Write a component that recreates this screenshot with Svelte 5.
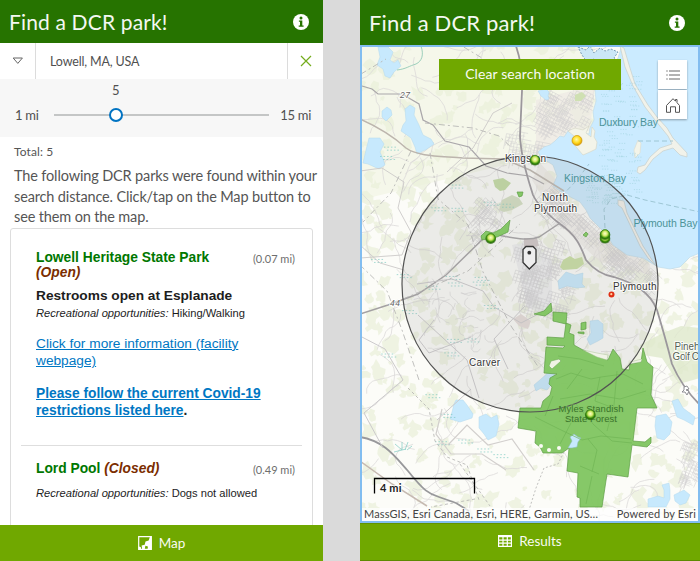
<script>
  // Small deterministic generator for the local street and woodland texture.
  function makeRandom(seed) {
    let s = seed;
    return () => {
      s = (s * 16807) % 2147483647;
      return s / 2147483647;
    };
  }

  const rand = makeRandom(4271);

  function walk(x, y, steps, len, turn) {
    let a = rand() * Math.PI * 2;
    let d = `M${x.toFixed(1)} ${y.toFixed(1)}`;
    for (let i = 0; i < steps; i++) {
      a += (rand() - 0.5) * turn;
      x += Math.cos(a) * len;
      y += Math.sin(a) * len;
      d += `L${x.toFixed(1)} ${y.toFixed(1)}`;
    }
    return d;
  }

  function blob(x, y, r) {
    let pts = [];
    for (let i = 0; i < 11; i++) {
      const a = (i / 11) * Math.PI * 2;
      const q = r * (0.4 + rand() * 0.9);
      pts.push(`${(x + Math.cos(a) * q).toFixed(1)},${(y + Math.sin(a) * q).toFixed(1)}`);
    }
    return pts.join(' ');
  }

  // A cluster of short parallel blocks, rotated to sit beside the shore.
  function grid(x, y, angle, n) {
    let d = '';
    const c = Math.cos(angle), s = Math.sin(angle);
    for (let i = 0; i < n; i++) {
      const o = i * 3.4;
      const l = 8 + rand() * 8;
      d += `M${x - s * o} ${y + c * o}l${c * l} ${s * l}`;
      d += `M${x + c * o} ${y + s * o}l${-s * l} ${c * l}`;
    }
    return d;
  }

  const woods = Array.from({ length: 620 }, () => blob(360 + rand() * 340, 45 + rand() * 477, 2 + rand() * 7));
  const streets = Array.from({ length: 210 }, () => walk(360 + rand() * 340, 45 + rand() * 477, 9, 5, 1.1));
  const lanes = [
    ...Array.from({ length: 22 }, () => grid(535 + rand() * 50, 90 + rand() * 40, 0.5, 4)),
    ...Array.from({ length: 42 }, () => {
      const t = rand();
      return grid(533 + t * 110 + rand() * 16, 176 + t * 85 + rand() * 26, 0.75, 4);
    }),
    ...Array.from({ length: 34 }, () => grid(515 + rand() * 50, 238 + rand() * 70, 0.3, 4)),
    ...Array.from({ length: 26 }, () => walk(425 + rand() * 60, 290 + rand() * 60, 4, 4, 1.8)),
    ...Array.from({ length: 14 }, () => grid(474 + rand() * 30, 192 + rand() * 40, 0.7, 3)),
    ...Array.from({ length: 12 }, () => grid(680 + rand() * 18, 440 + rand() * 40, 0.4, 3)),
    ...Array.from({ length: 12 }, () => grid(505 + rand() * 35, 125 + rand() * 36, 0.2, 3))
  ];
  const marsh = Array.from({ length: 26 }, () => [365 + rand() * 140, 140 + rand() * 330]);
  const shoals = Array.from({ length: 95 }, () => [598 + rand() * 40, 75 + rand() * 120]);
  const flats = Array.from({ length: 45 }, () => [585 + rand() * 32, 178 + rand() * 26]);

  const labels = [
    { t: 'Duxbury Bay', x: 599, y: 126, w: 59, c: 'sea' },
    { t: 'Kingston Bay', x: 564, y: 181.5, w: 62, c: 'sea' },
    { t: 'Plymouth Bay', x: 633.5, y: 226.5, w: 64, c: 'sea' },
    { t: 'Kingston', x: 505, y: 162, w: 41, c: 'town' },
    { t: 'North', x: 542, y: 201, w: 26, c: 'town' },
    { t: 'Plymouth', x: 534, y: 212, w: 43, c: 'town' },
    { t: 'Plymouth', x: 613, y: 290, w: 43.5, c: 'town' },
    { t: 'Carver', x: 469, y: 366, w: 31, c: 'town' },
    { t: 'Pineh', x: 674.5, y: 349.5, w: 25, c: 'place' },
    { t: 'Golf C', x: 672.5, y: 360, w: 26.5, c: 'place' },
    { t: 'Myles Standish', x: 558.5, y: 412, w: 65, c: 'forest' },
    { t: 'State Forest', x: 565, y: 422, w: 52, c: 'forest' },
    { t: '27', x: 400, y: 98, w: 10, c: 'route' },
    { t: '44', x: 390, y: 305.5, w: 10, c: 'route' }
  ];

  const pins = [
    [535, 160], [490.7, 238.3], [605, 238], [605, 234.3], [590.3, 414.5]
  ];
</script>

{#snippet info()}
  <svg class="info" viewBox="0 0 16 16" width="16" height="16">
    <circle cx="8" cy="8" r="8" fill="#fff" />
    <circle cx="8" cy="4" r="1.5" fill="#267300" />
    <path d="M5.9 6.5h3.4v5h1.3v1.2H5.7v-1.2H7V7.7H5.9z" fill="#267300" />
  </svg>
{/snippet}

<div class="board">
  <section class="phone left">
    <header><h1>Find a DCR park!</h1>{@render info()}</header>
    <div class="search">
      <div class="drop">
        <svg width="12" height="8" viewBox="0 0 12 8"><path d="M1.2 1h9.2L5.8 6.4z" fill="none" stroke="#666" /></svg>
      </div>
      <div class="query">Lowell, MA, USA</div>
      <div class="clear">
        <svg width="12" height="12" viewBox="0 0 12 12"><path d="M1 1l10 10M11 1L1 11" stroke="#74ac1c" stroke-width="1.2" /></svg>
      </div>
    </div>
    <div class="range">
      <span class="min">1 mi</span>
      <div class="track"><span class="value">5</span><i class="thumb"></i></div>
      <span class="max">15 mi</span>
    </div>
    <div class="results">
      <p class="total">Total: 5</p>
      <p class="intro">
        The following DCR parks were found within your<br />
        search distance. Click/tap on the Map button to<br />
        see them on the map.
      </p>
      <div class="card">
        <article class="first">
          <div class="title">
            <h2>Lowell Heritage State Park <em>(Open)</em></h2>
            <small>(0.07 mi)</small>
          </div>
          <h3>Restrooms open at Esplanade</h3>
          <p class="rec"><i>Recreational opportunities:</i> Hiking/Walking</p>
          <p class="link"><u>Click for more information (facility<br />webpage)</u></p>
          <p class="link strong"><u>Please follow the current Covid-19<br />restrictions listed here</u><b>.</b></p>
        </article>
        <article class="second">
          <div class="title">
            <h2>Lord Pool <em>(Closed)</em></h2>
            <small>(0.49 mi)</small>
          </div>
          <p class="rec"><i>Recreational opportunities:</i> Dogs not allowed</p>
        </article>
      </div>
    </div>
    <footer>
      <svg width="14" height="14" viewBox="0 0 14 14">
        <path d="M.7.7h12.6v12.6H.7z" fill="none" stroke="#fff" stroke-width="1.2" />
        <path d="M13.5.5v13H9.6l.3-3-2.5-.8-.7 3.8H4.2L3.6 9.6l3.1-.8.8-3.2 3.2-1L12 .5zM.5 10.5l2.3.4.4 2.6H.5z" fill="#fff" />
      </svg>
      <span>Map</span>
    </footer>
  </section>

  <section class="phone right">
    <header><h1>Find a DCR park!</h1>{@render info()}</header>
    <div class="map">
      <svg class="canvas" viewBox="360 45 340 478" width="340" height="478">
        <defs>
          <radialGradient id="green" cx=".5" cy=".42" r=".55">
            <stop offset="0" stop-color="#fbffd0" /><stop offset=".45" stop-color="#d3ea6c" />
            <stop offset=".8" stop-color="#4a9d12" /><stop offset="1" stop-color="#1d6500" />
          </radialGradient>
          <radialGradient id="gold" cx=".45" cy=".4" r=".6">
            <stop offset="0" stop-color="#fff9a8" /><stop offset=".6" stop-color="#ffd91c" /><stop offset="1" stop-color="#d99400" />
          </radialGradient>
        </defs>
        <rect x="360" y="45" width="340" height="478" fill="#fcfcf8" />
        <path d="M360 45h235v110l-70 5-165 40z" fill="#f5f7ea" />
        <g fill="#eaf0da" opacity=".7">
          {#each woods as w}<polygon points={w} />{/each}
        </g>
        <g fill="none" stroke="#dad8d8" stroke-width=".8" opacity=".9">
          {#each streets as d}<path {d} />{/each}
        </g>
        <path d="M536 100L595 85 590 130 560 140 536 155zM540 163L558 182 575 212 612 244 650 264 650 275 600 262 560 225 532 180z" fill="#ece8e3" opacity=".65" />
        <path d="M512 245l20-4 20 20v55l-24-8z" fill="#eaeaec" opacity=".7" />
        <g fill="none" stroke="#cfcdcf" stroke-width=".6" opacity=".8">
          {#each lanes as d}<path {d} />{/each}
        </g>
        <path d="M524 238l13 0 2 8-15 3z" fill="#d0c6c6" />
        <path d="M513 319l8-5 10 7-3 8-9-3z" fill="#e6dcd8" />
        <path d="M493 180l10-2 8 5-6 7-5 1-5-4z" fill="#c2dba2" />
        <path d="M502 200l10-5 7 3 4 6-11 6-8 2-5-2z" fill="#d4dfc1" />
        <path d="M575 95l7-3 4 4-5 5-6 0z" fill="#cfe0b2" />
        <path d="M640 345l23-12 18-7 19 2v50l-21 6-17-26-19-3z" fill="#dfe9cc" opacity=".8" />
        <path d="M560 267l3-7 7-4 5 3 7-2 2 7-7 5-14 1z" fill="#c9dfa2" />

        <!-- sea and shoreline -->
        <path d="M622 45L618 58 607 72 598 82 595 90 596 101 593 112 594 120 590 128 589 134 578 132 568 131 564 137 560 136 555 141 550 145 544 147 538 152 542 158 553 165 557 176 553 186 563 193 580 202 586 210 590 218 599 227 607 235 613 245 627 255 643 258 658 267 670 269 680 267 690 257 700 253V45z" fill="#cbebff" stroke="#bcd8e5" stroke-width=".6" />
        <path d="M578 47l8 3 4-4 4 7 6-5 5 3 6-2 7 3-4 6 5 4-9 2-5-4-5 5-6-6-7 3-5-7z" fill="#cbe7f7" stroke="#789cb8" stroke-dasharray="2 1.5" />
        <path d="M568 131L575 128 583 130 589 126 586 133 591 137 592 127 595 131 594 137 597 142 596 149 590 152 583 155 577 148 572 142 574 136z" fill="#f3f4e9" stroke="#d5d5c5" stroke-width=".6" />
        <path d="M620 46L624 48 630 68 635 84 648 105 657 117 667 128 673 138 687 153 687 157 680 155 673 148 663 151 653 159 645 170 640 174 637 172 638 167 645 165 650 157 660 148 672 144 668 136 655 120 645 107 633 86 625 67z" fill="#f1f2ea" stroke="#c9d0cc" stroke-width=".7" />
        <path d="M638 140l3 3-1 10-5 5-1-8z" fill="#f3f4e9" stroke="#dcded3" stroke-width=".7" />
        <path d="M618 200L624 201 627 213 643 246 656 266 648 258 640 246 622 208 618 205z" fill="#f2f0e8" stroke="#bcc9c9" stroke-width=".7" />
        <g stroke="#93cdd6" stroke-width=".7" stroke-dasharray="1 1.5" opacity=".75">
          {#each shoals as [x, y]}<path d="M{x} {y}h7" />{/each}
          {#each flats as [x, y]}<path d="M{x} {y}h6" />{/each}
        </g>
        <path d="M605 228l-1-19 7-10 16-4 18 5 55 12M638 141h35M556 202l21-22 12-16" fill="none" stroke="#92bdc9" stroke-dasharray="5 3" stroke-width=".8" />

        <!-- ponds -->
        <g fill="#c7e9fd" stroke="#b3d9ed" stroke-width=".5">
          <path d="M378 47h10l5 5-3 8 4 3 4-3 3 6-7 6-4 6-5-2-2-7-6-4 3-8z" />
          <path d="M405 109l5-4 5 3-1 7 5 10 4 10 8 4 3 5-7 5-10 5-2-7-4-9-10-7 2-6 3-4z" />
          <path d="M369 138l11 0 4 6-4 8 3 7 2 6-6 4-11-5-5-1 3-13z" />
          <path d="M382 111l5-4 4 3 1 5-6 6-4-4z" />
          <path d="M538 91l8-2 3 3-1 4 1 3-3 1-5-4z" />
          <path d="M558 281l8-9 9 3 8-2-1 11 3 3-8 1-10-2-8 3z" />
          <path d="M590 321l8-1 5 4v14l-5 3-8 4-3-6 4-6z" />
          <path d="M534 385l14-12 7 0-4 12-4 5-6-2-5 3z" />
          <path d="M454 404L456 400 463 400 467 405 473 414 472 418 460 422 450 419 452 412z" />
          <path d="M479 417l7-3 5 4 6-3 2 9-3 12-8 4-4-6-5-6z" />
          <path d="M656 416l10-2 6 8-2 12-6 6-7-2-2-12z" />
          <path d="M672 401l6-2 5 9 12 9-2 8-9-5-7-3z" />
          <path d="M648 499l10-3 6 2 0-8-2-5 7-2 1 7 0 9-4 8-18 0z" />
          <path d="M674 495l10-5 6 5-4 8-6 2-5-4z" />
        </g>
        <g fill="none" stroke="#75c8bf" stroke-width=".8" stroke-dasharray="1.5 2" opacity=".8">
          {#each marsh as [x, y]}<path d="M{x} {y}h12m-9 3h13" />{/each}
          <path d="M394 452l12-3m-11-5l7 6m0-8v8m6-8l-3 8m7-4l-5 4" stroke-dasharray="none" />
        </g>
        <path d="M421 46c3 9 1 15-5 18-7 2-10 5-19 6" fill="none" stroke="#9ccfbb" />

        <!-- roads -->
        <g fill="none" stroke="#b3b0af" stroke-width="1.2">
          <path d="M360 119c20 9 34 18 46 29 12 9 37 8 57 10l41 1 26 11 34 21" stroke="#bcb5ad" stroke-width="1.5" />
          <path d="M360 461l32 23 35 22" stroke="#c6bab1" stroke-width="1.5" />
          <path d="M362 86l10 3 6 5 24 0 17 10 4 16 10 5 12 16 24 6 17 19 21 7 22 3 15 8" stroke="#aaa7aa" />
          <path d="M516 46C522 64 523 76 522 91L520 136C521 160 530 185 533 195 538 206 551 217 560 224 578 236 582 250 586 260 594 270 602 275 614 277 634 283 650 292 657 310 663 330 668 348 672 364 678 378 688 393 700 405" stroke="#9b979c" stroke-width="1.8" />
          <path d="M360 314l28-9 30-11 28-19 43-42c26 6 40 8 50 4l21-14" stroke="#a4a1a3" stroke-width="1.5" />
          <path d="M360 437C385 441 396 458 408 471 424 491 429 494 439 497L456 503 469 511" stroke="#98989b" stroke-width="1.8" />
          <path d="M360 171l22-3 22 14-6 26 13 24-9 23-42 3M360 245l20 18 24 7M447 172l26-24 20-35 19-10" stroke="#ccc9c8" stroke-width=".9" />
          <path d="M417 284l35-5 31 12 11 16 27 16 25-13M418 315l49 45 12 38M437 420l34-31M525 306l-31 33 14 30M360 336l25 13 18 31-39 33 19 35M434 320l-15 20 10 13 42-16" stroke="#cccacc" stroke-width="1" />
          <path d="M448 445l19-20 21 20 24-6 22 31M442 409l-6 25 15 20 31 0 24 16" stroke="#d2cfcd" />
        </g>
        <g fill="none" stroke="#b9b9b7" stroke-dasharray="6 3 2 3" stroke-width=".9">
          <path d="M411 151l-20 42-28 29M430 153l8 46 30 26 15 47 28 54 28 42" />
          <path d="M360 265l27 26 15 39 17 50M425 123l48 5 26 8 13 12M361 74l25-15M500 78l-18-20-20-12M403 299l65-28 52-47" />
          <path d="M408 388l21 21 6 32 12 16 20 8 12 35M460 464l30 42M475 499l-44 8" stroke-dasharray="3 2.500" />
          <path d="M564 452l-6 12-14 4-8 20-7 22" stroke-dasharray="2 2" />
        </g>

        <!-- search radius -->
        <circle cx="530" cy="284" r="128" fill="#a0a0a0" fill-opacity=".18" />

        <!-- park boundaries -->
        <g fill="#7fc560" fill-opacity=".95" stroke="#5f9d46" stroke-width=".7">
          <path d="M520 408L541 408 543 401 550 395 552 387 549 384 550 378 557 374 544 373 546 347 563 348 565 346 547 345 547 337 564 338 566 323 571 325 569 333 574 335 574 345 583 350 597 356 608 360 613 349 620 358 622 369 629 370 630 364 641 362 643 348 647 362 653 367 651 395 657 408 637 408 633 441 645 442 651 437 651 443 647 447 632 445 628 477 607 474 602 507 580 507 580 498 577 497 578 473 567 471 569 448 562 453 543 453 540 447 535 443 536 431 518 428z" />
          <path d="M553 312l14 1-1 11-13-3zM534 314l10-3 7-8 1 8-7 5zM581 323l5-1 0 7-5 1zM578 332l6 0 0 2-6-1z" />
          <path d="M481 236l5-5 7 2 8-4 9-9-2 12-11 5-15 3zM517 192l6 0-1 4-3 1zM586 232l2 2-2 3-3-2z" />
        </g>
        <path d="M549 366l2-5 8-2 2 2-9 8z" fill="#f0f3e6" stroke="#71ac59" stroke-width=".6" />
        <path d="M583 350L597 353 608 355 607 360 597 357zM629 364l12-2 1-3-12 3z" fill="#f0f3e6" stroke="#9bbb84" stroke-width=".4" />
        <path d="M568 448L572 441 570 437 574 434 578 437 581 438 578 442 577 447 572 448z" fill="#c7e9fd" stroke="#8bbdb5" stroke-width=".6" />
        <g fill="none" stroke="#70b454" stroke-width=".7">
          <path d="M556 379l15-6 20 6 10-2 22-3 20 10M558 356l22 3 24 7M567 389l15-20M575 403l19 22 18 16 20 2M535 417l22 11 25 12 19-4 30 3M588 439l9 11-5 22M580 466l19 8M592 476l-6 28M617 371l-3 34-7 26M553 396l-8 20M571 423l-11 21M600 377l-5 24 24 9M560 399l30-5 30 5 26-8" />
        </g>
        <g fill="#fbfbf5"><circle cx="541" cy="446" r="2" /><circle cx="549" cy="450" r="2" /><circle cx="559" cy="448" r="2" /></g>
        <circle cx="530" cy="284" r="128" fill="none" stroke="#525252" stroke-width="1.2" />

        {#each labels as l}
          <text x={l.x} y={l.y} textLength={l.w} class={l.c}>{l.t}</text>
        {/each}

        <path d="M684 387l3-1 2 3-3 1 3 1-2 4-2-3-3 0 2-2z" fill="#fff" stroke="#85848a" stroke-width=".9" />
        {#each pins as [x, y]}
          <ellipse cx={x} cy={y + 0.7} rx="5.3" ry="4.9" fill="#215d0b" opacity=".65" />
          <circle cx={x} cy={y} r="4.7" fill="url(#green)" stroke="#347c0a" stroke-width=".6" />
        {/each}
        <circle cx="577" cy="140.5" r="5" fill="url(#gold)" stroke="#cc980e" stroke-width=".7" />
        <circle cx="611.5" cy="294.5" r="3" fill="#df2e12" />
        <circle cx="611.3" cy="294.2" r="1.1" fill="#ffd1a0" />
        <path d="M526 246.5h7l3 3v13l-6.700 6.500-6.300-6.500v-13z" fill="#eee" stroke="#333" stroke-width="1.3" />
        <circle cx="529.3" cy="252.700" r="1.900" fill="#333" />
        <path d="M374.500 493.500v-15h100v15" fill="none" stroke="#000" stroke-width="1.300" />
        <text x="380" y="491.500" class="scale" textLength="21.500">4 mi</text>
      </svg>
      <button class="clear-location">Clear search location</button>
      <div class="tools">
        <div class="tool">
          <svg width="14" height="10" viewBox="0 0 14 10"><path d="M3 1h11M3 5h11M3 9h11M.3 1h1.400M.3 5h1.400M.3 9h1.400" stroke="#666" /></svg>
        </div>
        <div class="tool">
          <svg width="16" height="16" viewBox="0 0 16 16"><path d="M1.500 15.300V8.500L8 1.700l2.500 2.500V2.500H12v3.200l2.500 2.800v6.800h-4V9.800h-5v5.500z" fill="none" stroke="#555" /></svg>
        </div>
      </div>
      <div class="credits"><span>MassGIS, Esri Canada, Esri, HERE, Garmin, US…</span><span class="esri">Powered by Esri</span></div>
    </div>
    <footer>
      <svg width="14" height="12" viewBox="0 0 14 12"><path d="M.6.6h12.800v10.800H.6zM.6 1.600h12.800M.6 5.100h12.800M.6 8.200h12.800M5 2v9.400M9.300 2v9.400" fill="none" stroke="#fff" stroke-width="1.200" /></svg>
      <span>Results</span>
    </footer>
  </section>
</div>

<style>
  :global(body) { margin: 0; }
  * { box-sizing: border-box; }
  .board { display: flex; justify-content: space-between; width: 700px; height: 561px; overflow: hidden; background: #dadada; font-family: Lato, sans-serif; color: #555; }
  .phone { display: flex; flex-direction: column; height: 561px; background: #fff; }
  .left { width: 323px; }
  .right { width: 340px; }
  header { display: flex; flex: none; align-items: center; justify-content: space-between; height: 43px; padding: 0 14px 0 9px; background: #267300; }
  .right header { height: 45px; padding: 0 15px 0 9px; }
  h1 { margin: 0; color: #f4f8f2; font-size: 21px; font-weight: 400; line-height: 42px; letter-spacing: .15px; white-space: nowrap; }
  .right h1 { font-size: 22px; line-height: 44px; }
  .search { display: flex; flex: none; height: 36px; font-size: 12.500px; }
  .search > div { display: flex; align-items: center; }
  .drop { width: 36px; justify-content: center; border-right: 1px solid #dcdcdc; }
  .query { flex: 1; padding-left: 14px; letter-spacing: -.15px; color: #505050; }
  .clear { width: 36px; justify-content: center; border-left: 1px solid #dcdcdc; }
  .range { display: flex; flex: none; align-items: center; height: 58px; padding: 13px 12px 0 15px; background: #f7f7f7; font-size: 13px; letter-spacing: -.3px; color: #505050; }
  .min { width: 39px; }
  .track { position: relative; width: 215px; height: 2px; background: #c4c6c6; }
  .max { margin-left: auto; }
  .value { position: absolute; left: 58px; top: -32px; }
  .thumb { position: absolute; left: 55px; top: -6px; width: 14px; height: 14px; border: 2px solid #0073c2; border-radius: 50%; background: #fff; }
  .results { flex: 1; min-height: 0; overflow: hidden; padding: 7px 0 0; }
  p { margin: 0; }
  .total { margin-left: 14px; font-size: 12px; line-height: 16px; letter-spacing: .1px; }
  .intro { margin: 6px 0 0 14px; font-size: 14.500px; line-height: 20.600px; letter-spacing: -.14px; white-space: nowrap; }
  .card { width: 303px; height: 310px; margin: 0 0 0 10px; border: 1px solid #ddd; border-radius: 3px; padding: 21px 10px 0; font-family: "Liberation Sans", Arial, sans-serif; color: #1d1d1d; }
  article { padding: 0 7px 0 15px; }
  .first { height: 196px; border-bottom: 1px solid #dedede; }
  .second { padding-top: 15px; }
  .title { display: flex; justify-content: space-between; }
  h2 { width: 188px; margin: 0; color: #007700; font-size: 13.800px; line-height: 15.500px; white-space: nowrap; }
  .first h2 { white-space: normal; }
  em { color: #7b2d00; }
  small { margin-top: -2px; color: #6e6e6e; font: 11px/21px Lato, sans-serif; }
  h3 { margin: 6px 0 0; font-size: 13.700px; line-height: 17px; }
  .rec { font-size: 11.150px; line-height: 18px; white-space: nowrap; }
  .second .rec { margin-top: 4px; }
  .link { margin-top: 13px; color: #0077c3; font-size: 13.700px; line-height: 17.500px; white-space: nowrap; }
  .link b { color: #222; }
  .strong { margin-top: 15px; font-size: 13.750px; font-weight: 700; }
  footer { display: flex; flex: none; align-items: center; justify-content: center; gap: 7px; height: 36px; background: #70a800; color: #f8fbf2; font-size: 13.500px; }
  .right footer { height: 38px; padding-bottom: 2px; border-top: 1px solid #629300; border-bottom: 1px solid #5c8a00; }
  .map { position: relative; height: 478px; overflow: hidden; }
  .canvas { display: block; }
  .map::after { content: ""; position: absolute; inset: 0; border: 2px solid #82bdf0; pointer-events: none; }
  .clear-location { position: absolute; left: 79px; top: 14px; width: 182px; height: 31px; padding: 0 0 2px; border: 0; background: #70a800; color: #f8fbf2; font: 14px Lato, sans-serif; letter-spacing: .1px; }
  .tools { position: absolute; right: 13px; top: 15px; display: flex; flex-direction: column; gap: 1px; }
  .tool { display: flex; align-items: center; justify-content: center; width: 29px; height: 29px; background: #fff; box-shadow: 0 1px 2px #0005; }
  .credits { position: absolute; left: 1px; right: 1px; bottom: 2px; display: flex; justify-content: space-between; height: 13px; padding: 0 3px; background: #ffffffb5; color: #444; font-size: 11px; line-height: 12px; letter-spacing: .13px; white-space: nowrap; }
  text { font-family: "Liberation Sans", Arial, sans-serif; font-size: 10px; paint-order: stroke; stroke: #ffffffd0; stroke-width: 2px; stroke-linejoin: round; }
  .sea { fill: #4b9398; font-size: 10.500px; stroke: none; }
  .town { fill: #343434; }
  .place { fill: #536052; }
  .forest { fill: #397329; stroke: #83c36570; font-size: 9.500px; }
  .route { fill: #666; font-size: 8.500px; font-style: italic; }
  .scale { fill: #222; font-family: Lato, sans-serif; font-size: 11px; font-weight: 700; }
</style>
